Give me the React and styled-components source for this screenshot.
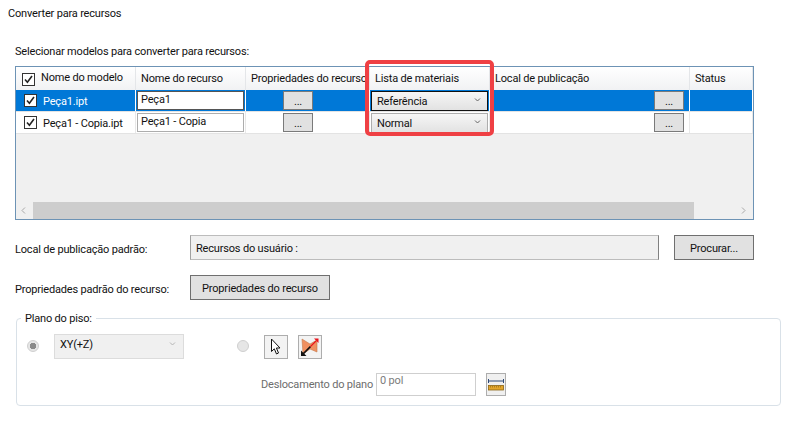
import React from "react"
import styled, { createGlobalStyle } from "styled-components"

const GlobalStyle = createGlobalStyle`
  html, body {
    margin: 0;
    background: #fff;
  }
  body {
    font-family: Roboto, "Liberation Sans", sans-serif;
    font-size: 11px;
    letter-spacing: -0.18px;
    color: #111;
  }
`

const Check = () => (
  <svg width="9" height="9" viewBox="0 0 9 9">
    <path d="M1 4.5 L3.4 7.2 L8 1" fill="none" stroke="#222" strokeWidth="1.6" />
  </svg>
)

const Chevron = ({ dir = "down", color = "#666" }) => {
  const d = {
    down: "M1 1.5 L3.5 4 L6 1.5",
    left: "M4 0.5 L1 3.5 L4 6.5",
    right: "M1 0.5 L4 3.5 L1 6.5",
  }[dir]
  return (
    <svg width="7" height="7" viewBox="0 0 7 7">
      <path d={d} fill="none" stroke={color} strokeWidth="1" />
    </svg>
  )
}

const CursorIcon = () => (
  <svg width="14" height="18" viewBox="0 0 14 18">
    <path d="M2.5 1 V13.5 L5.3 10.8 L7.5 16 L9.5 15 L7.4 10 H11 Z" fill="#fff" stroke="#111" strokeWidth="1" />
  </svg>
)

const PlaneIcon = () => (
  <svg width="20" height="20" viewBox="0 0 20 20">
    <path d="M2 2 L10 7 L17 3 V15 L10 12 L3 17 Z" fill="#f09060" stroke="#c47a4c" strokeWidth="0.6" />
    <path d="M3 17 L10.5 9.5" stroke="#111" strokeWidth="1.7" />
    <path d="M1 19 V13.5 L6.5 19 Z" fill="#111" />
    <path d="M10.5 9.5 L16 4" stroke="#e8141c" strokeWidth="1.1" />
    <path d="M18.5 1.5 V6 L14 1.5 Z" fill="#e8141c" />
  </svg>
)

const RulerIcon = () => (
  <svg width="16" height="14" viewBox="0 0 16 14">
    <path d="M0.5 1 V5 M15.5 1 V5 M0.5 3 H15.5" stroke="#2f4a78" strokeWidth="1" fill="none" />
    <rect x="0.5" y="7.5" width="15" height="4.5" fill="#e3a62e" stroke="#8a6414" strokeWidth="0.8" />
    <path d="M2.5 8 V9.5 M4.5 8 V9.5 M6.5 8 V9.5 M8.5 8 V9.5 M10.5 8 V9.5 M12.5 8 V9.5" stroke="#8a6414" strokeWidth="0.6" />
  </svg>
)

const columns = "120px 110px 124px 120px 200px 1fr"

const models = [
  { file: "Peça1.ipt", name: "Peça1", bom: "Referência", selected: true },
  { file: "Peça1 - Copia.ipt", name: "Peça1 - Copia", bom: "Normal", selected: false },
]

const App = () => {
  return (
    <Page>
      <GlobalStyle />
      <Title>Converter para recursos</Title>
      <SectionLabel>Selecionar modelos para converter para recursos:</SectionLabel>
      <Table>
        <HeaderRow>
          <HeaderCell>
            <CheckBox><Check /></CheckBox>
            <FirstHeading>Nome do modelo</FirstHeading>
          </HeaderCell>
          <HeaderCell>Nome do recurso</HeaderCell>
          <HeaderCell>Propriedades do recurso</HeaderCell>
          <HeaderCell>Lista de materiais</HeaderCell>
          <HeaderCell>Local de publicação</HeaderCell>
          <HeaderCell>Status</HeaderCell>
        </HeaderRow>
        {models.map((m) => (
          <Row key={m.file} $selected={m.selected}>
            <Cell $selected={m.selected}>
              <CheckBox $row><Check /></CheckBox>
              <FileName>{m.file}</FileName>
            </Cell>
            <Cell $selected={m.selected}>
              <NameInput $selected={m.selected}>{m.name}</NameInput>
            </Cell>
            <Cell $selected={m.selected} $center>
              <DotsButton>...</DotsButton>
            </Cell>
            <Cell $selected={m.selected}>
              <BomSelect $selected={m.selected}>
                <FileName>{m.bom}</FileName>
                <Chevron />
              </BomSelect>
            </Cell>
            <Cell $selected={m.selected} $end>
              <DotsButton>...</DotsButton>
            </Cell>
            <Cell $selected={m.selected} />
          </Row>
        ))}
        <TableBody />
        <ScrollBar>
          <ScrollEnd><Chevron dir="left" color="#a8a8a8" /></ScrollEnd>
          <ScrollThumb />
          <ScrollEnd $wide><Chevron dir="right" color="#a8a8a8" /></ScrollEnd>
        </ScrollBar>
        <Highlight />
      </Table>

      <FormRow>
        <FormLabel>Local de publicação padrão:</FormLabel>
        <PathField>Recursos do usuário :</PathField>
        <Button $width={80}>Procurar...</Button>
      </FormRow>
      <FormRow>
        <FormLabel>Propriedades padrão do recurso:</FormLabel>
        <Button $width={140}>Propriedades do recurso</Button>
      </FormRow>

      <Group>
        <Legend>Plano do piso:</Legend>
        <GroupRow>
          <Radio $checked />
          <PlaneSelect>
            XY(+Z)
            <Chevron color="#b5b5b5" />
          </PlaneSelect>
          <Radio $second />
          <IconButton><CursorIcon /></IconButton>
          <IconButton><PlaneIcon /></IconButton>
        </GroupRow>
        <OffsetRow>
          <OffsetLabel>Deslocamento do plano</OffsetLabel>
          <OffsetInput>0 pol</OffsetInput>
          <RulerButton><RulerIcon /></RulerButton>
        </OffsetRow>
      </Group>
    </Page>
  )
}

const Page = styled.div`
  width: 790px;
  height: 432px;
  box-sizing: border-box;
  padding: 6px 0 0 8px;
  overflow: hidden;
`
const Title = styled.div`
  line-height: 15px;
`
const SectionLabel = styled.div`
  margin: 23px 0 0 7px;
  line-height: 15px;
`
const Table = styled.div`
  position: relative;
  box-sizing: border-box;
  width: 739px;
  height: 154px;
  margin: 7px 0 0 7px;
  border: 1px solid #6d93b5;
  display: flex;
  flex-direction: column;
  background: #f0f0f0;
`
const HeaderRow = styled.div`
  display: grid;
  grid-template-columns: ${columns};
  height: 23px;
  flex: none;
  background: linear-gradient(#fff, #f1f2f4);
`
const HeaderCell = styled.div`
  display: flex;
  align-items: center;
  padding: 0 0 1px 5px;
  border-right: 1px solid #e4e6e9;
  white-space: nowrap;
  overflow: hidden;
`
const FirstHeading = styled.span`
  margin: -2px 0 0 6px;
`
const Row = styled.div`
  display: grid;
  grid-template-columns: ${columns};
  height: 21px;
  flex: none;
  margin-bottom: 1px;
  background: ${(p) => (p.$selected ? "#0078d7" : "#fff")};
  box-shadow: 0 1px 0 #e3e3e3;
`
const Cell = styled.div`
  display: flex;
  align-items: center;
  justify-content: ${(p) => (p.$end ? "flex-end" : "flex-start")};
  padding: ${(p) => (p.$end ? "0 5px 0 0" : p.$center ? "0 0 0 37px" : "0 1px")};
  color: ${(p) => (p.$selected ? "#fff" : "#111")};
  border-right: 1px solid ${(p) => (p.$selected ? "#fff" : "#e8e8e8")};
  white-space: nowrap;
  box-sizing: border-box;
`
const FileName = styled.span`
  padding-top: 2px;
`
const CheckBox = styled.span`
  box-sizing: border-box;
  width: 13px;
  height: 13px;
  flex: none;
  margin: ${(p) => (p.$row ? "0 6px 0 7px" : "3px 0 0 1px")};
  border: 1px solid #333;
  background: #fff;
  display: flex;
  align-items: center;
  justify-content: center;
`
const NameInput = styled.div`
  box-sizing: border-box;
  width: 107px;
  height: 19px;
  padding: 0 3px;
  line-height: 16px;
  color: #111;
  background: #fff;
  border: 1px solid ${(p) => (p.$selected ? "#555" : "#adadad")};
`
const DotsButton = styled.div`
  box-sizing: border-box;
  width: 30px;
  height: 19px;
  color: #111;
  line-height: 19px;
  text-align: center;
  background: #e1e1e1;
  border: 1px solid #7a7a7a;
`
const BomSelect = styled.div`
  box-sizing: border-box;
  width: 119px;
  height: 20px;
  padding: 0 6px 0 5px;
  display: flex;
  align-items: center;
  justify-content: space-between;
  color: #111;
  background: linear-gradient(#f6f6f6, #e2e2e2);
  border: 1px solid ${(p) => (p.$selected ? "#111" : "#adadad")};
`
const TableBody = styled.div`
  flex: 1;
`
const ScrollBar = styled.div`
  display: flex;
  height: 17px;
  flex: none;
  background: #f0f0f0;
`
const ScrollEnd = styled.div`
  width: ${(p) => (p.$wide ? "59px" : "17px")};
  flex: none;
  display: flex;
  align-items: center;
  justify-content: ${(p) => (p.$wide ? "flex-end" : "center")};
  padding-right: ${(p) => (p.$wide ? "5px" : "0")};
  box-sizing: border-box;
`
const ScrollThumb = styled.div`
  flex: 1;
  background: #cdcdcd;
`
const Highlight = styled.div`
  position: absolute;
  left: 349px;
  top: -7px;
  width: 129px;
  height: 76px;
  box-sizing: border-box;
  border: 4px solid #ef4044;
  border-radius: 5px;
  pointer-events: none;
`
const FormRow = styled.div`
  display: flex;
  align-items: center;
  width: 739px;
  height: 25px;
  margin: 15px 0 0 7px;
`
const FormLabel = styled.div`
  width: 175px;
  flex: none;
  padding-top: 3px;
`
const PathField = styled.div`
  box-sizing: border-box;
  width: 469px;
  height: 25px;
  margin-right: 15px;
  padding: 2px 5px 0;
  display: flex;
  align-items: center;
  background: #f0f0f0;
  border: 1px solid #bcbcbc;
  border-right-color: #808080;
  border-left-color: #a0a0a0;
`
const Button = styled.div`
  box-sizing: border-box;
  width: ${(p) => p.$width}px;
  height: 25px;
  padding-top: 2px;
  display: flex;
  align-items: center;
  justify-content: center;
  background: #e1e1e1;
  border: 1px solid #6f6f6f;
`
const Group = styled.div`
  position: relative;
  box-sizing: border-box;
  width: 765px;
  height: 88px;
  margin: 18px 0 0 8px;
  padding: 15px 0 0 10px;
  border: 1px solid #d9e1e8;
  border-radius: 4px;
`
const Legend = styled.div`
  position: absolute;
  left: 4px;
  top: -8px;
  padding: 0 4px;
  background: #fff;
  line-height: 15px;
`
const GroupRow = styled.div`
  display: flex;
  align-items: center;
  height: 25px;
`
const Radio = styled.span`
  box-sizing: border-box;
  width: 12px;
  height: 12px;
  flex: none;
  border-radius: 50%;
  margin: ${(p) => (p.$second ? "-2px 15px 0 53px" : "-2px 15px 0 0")};
  background: ${(p) =>
    p.$checked ? "radial-gradient(circle, #8a8a8a 0 3px, #e6e6e6 3.5px)" : "#e6e6e6"};
  border: 1px solid #cfcfcf;
`
const PlaneSelect = styled.div`
  box-sizing: border-box;
  width: 130px;
  height: 25px;
  padding: 0 7px 4px 5px;
  display: flex;
  align-items: center;
  justify-content: space-between;
  background: #f0f0f0;
  border: 1px solid #dcdcdc;
`
const IconButton = styled.div`
  box-sizing: border-box;
  width: 24px;
  height: 24px;
  margin-right: 10px;
  display: flex;
  align-items: center;
  justify-content: center;
  background: #f3f3f3;
  border: 1px solid #adadad;
`
const OffsetRow = styled.div`
  display: flex;
  align-items: center;
  margin: 14px 0 0 234px;
  height: 23px;
`
const OffsetLabel = styled.div`
  width: 115px;
  flex: none;
  color: #6d6d6d;
  white-space: nowrap;
`
const OffsetInput = styled.div`
  box-sizing: border-box;
  width: 100px;
  height: 23px;
  padding: 0 3px 8px;
  display: flex;
  align-items: center;
  color: #7c7c7c;
  border: 1px solid #cfcfcf;
`
const RulerButton = styled.div`
  box-sizing: border-box;
  width: 20px;
  height: 23px;
  margin-left: 10px;
  display: flex;
  align-items: center;
  justify-content: center;
  background: #f0f0f0;
  border: 1px solid #adadad;
`

export default App
